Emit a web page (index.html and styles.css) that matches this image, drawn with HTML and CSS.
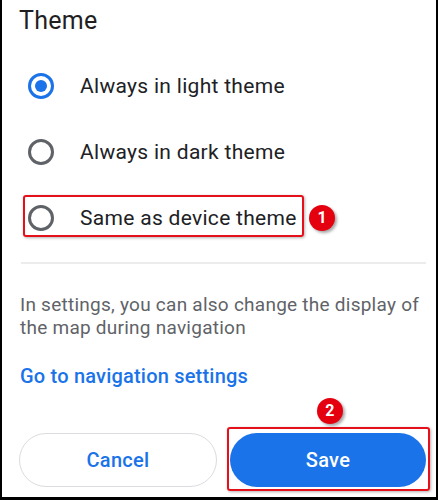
FILE: index.html
```html
<!DOCTYPE html>
<html lang="en">
<head>
<meta charset="UTF-8">
<meta name="viewport" content="width=device-width, initial-scale=1.0">
<title>Theme</title>
<link rel="stylesheet" href="styles.css">
</head>
<body>
  <div class="sheet">
    <h1 class="title">Theme</h1>

    <div class="choices">
      <label class="choice">
        <span class="radio checked"></span>
        <span class="choice-text">Always in light theme</span>
      </label>
      <label class="choice">
        <span class="radio"></span>
        <span class="choice-text">Always in dark theme</span>
      </label>
      <label class="choice">
        <span class="radio"></span>
        <span class="choice-text">Same as device theme</span>
        <span class="mark mark-row"></span>
        <span class="badge badge-row">1</span>
      </label>
    </div>

    <hr class="divider">

    <p class="note">In settings, you can also change the display of the map during navigation</p>
    <a class="nav-link" href="#">Go to navigation settings</a>

    <div class="actions">
      <button class="btn btn-outline">Cancel</button>
      <button class="btn btn-fill">Save
        <span class="mark mark-save"></span>
        <span class="badge badge-save">2</span>
      </button>
    </div>
  </div>
</body>
</html>
```

FILE: styles.css
```css
html, body {
  margin: 0;
  background-color: #fff;
}
body {
  font-family: Roboto, "Liberation Sans", Arial, sans-serif;
  color: #202124;
}
.sheet {
  width: 438px;
  height: 500px;
  box-sizing: border-box;
  border-left: 2px solid #000;
  border-right: 2px solid #000;
  border-bottom: 3px solid #000;
  padding: 7px 10px 0 17px;
}
.title {
  margin: 0 0 18px 0;
  font-size: 25px;
  line-height: 28px;
  letter-spacing: 0.3px;
  font-weight: 400;
  color: #1f1f1f;
}
.choice {
  position: relative;
  display: flex;
  align-items: center;
  height: 66px;
  padding-left: 9px;
}
.radio {
  width: 26px;
  height: 26px;
  box-sizing: border-box;
  border: 3px solid #5f6368;
  border-radius: 50%;
  display: flex;
  align-items: center;
  justify-content: center;
}
.radio.checked {
  border-color: #1a73e8;
}
.radio.checked::after {
  content: "";
  width: 12px;
  height: 12px;
  border-radius: 50%;
  background-color: #1a73e8;
}
.choice-text {
  margin-left: 26px;
  font-size: 21px;
  letter-spacing: 0.3px;
  color: #202124;
}
.divider {
  margin: 11px 0 0 2px;
  border: none;
  height: 2px;
  background-color: #ececec;
}
.note {
  margin: 29px 0 0 1px;
  font-size: 19px;
  line-height: 23px;
  letter-spacing: 0.25px;
  color: #5f6368;
}
.nav-link {
  display: block;
  margin: 26px 0 0 1px;
  font-size: 20px;
  line-height: 23px;
  letter-spacing: 0.2px;
  font-weight: 500;
  color: #1a73e8;
  text-decoration: none;
}
.actions {
  display: flex;
  gap: 13px;
  margin-top: 45px;
}
.btn {
  position: relative;
  flex: 1;
  height: 54px;
  border-radius: 27px;
  font-family: inherit;
  font-size: 20px;
  font-weight: 500;
  letter-spacing: 0.3px;
  padding: 0;
}
.btn-outline {
  background-color: #fff;
  border: 1px solid #dadce0;
  color: #1a73e8;
}
.btn-fill {
  background-color: #1a73e8;
  border: none;
  color: #fff;
}

/* annotations */
.mark {
  position: absolute;
  border: 2px solid #e5101a;
  border-radius: 3px;
  box-shadow: 1px 1px 3px rgba(0, 0, 0, 0.3);
}
.mark-row {
  left: 4px;
  top: 10px;
  width: 277px;
  height: 38px;
}
.mark-save {
  left: -3px;
  top: -6px;
  width: 199px;
  height: 60px;
}
.badge {
  position: absolute;
  width: 26px;
  height: 26px;
  border-radius: 50%;
  background-color: #e5000f;
  color: #fff;
  font-size: 16px;
  font-weight: 700;
  line-height: 26px;
  text-align: center;
  box-shadow: 2px 2px 3px rgba(0, 0, 0, 0.35);
}
.badge-row {
  left: 290px;
  top: 20px;
}
.badge-save {
  left: 87px;
  top: -35px;
}
```
